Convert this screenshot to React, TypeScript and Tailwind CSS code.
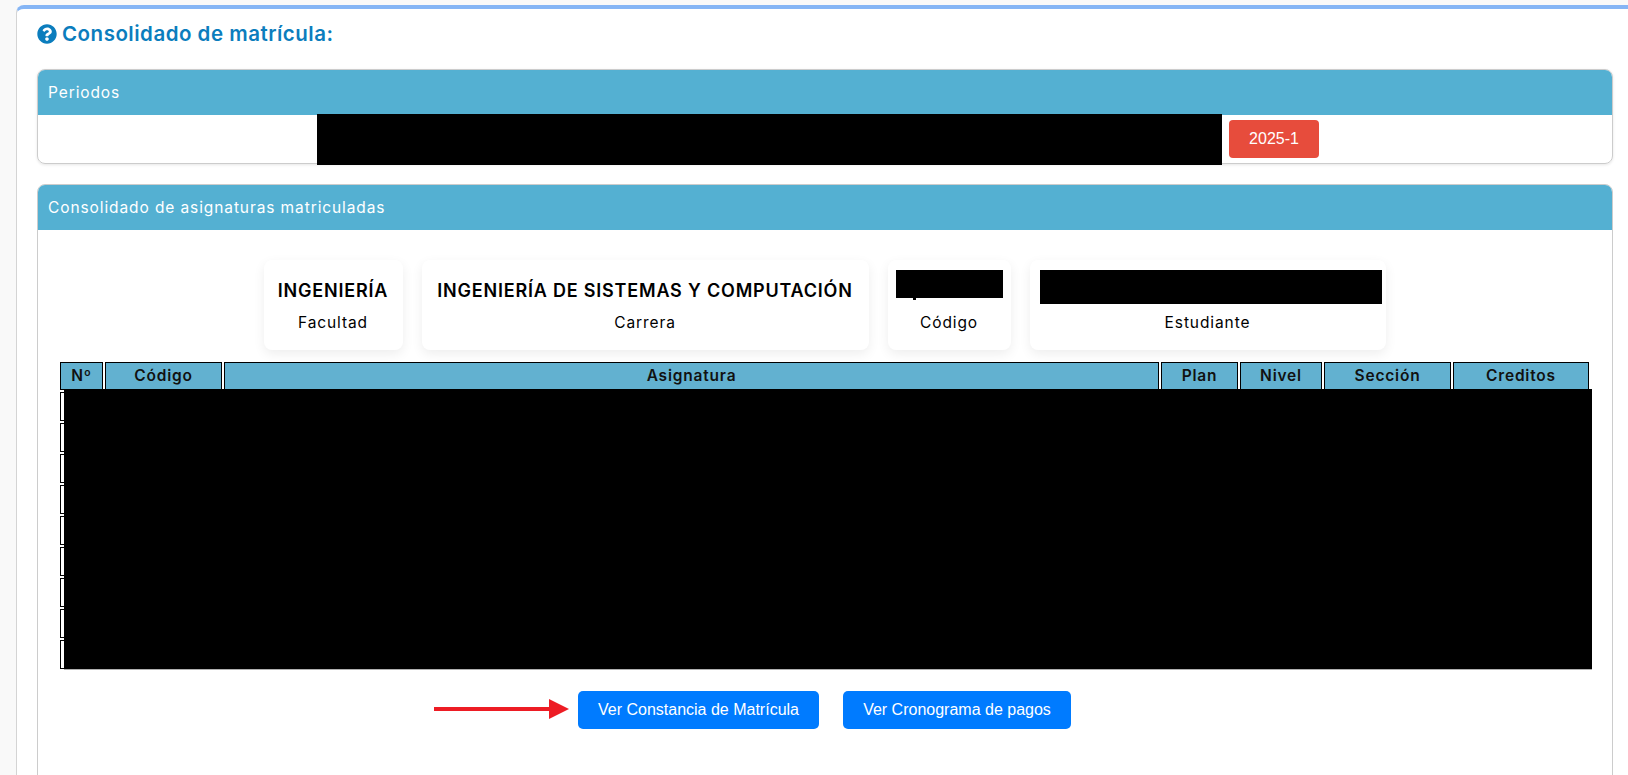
import React from 'react';
import { FaQuestionCircle } from 'react-icons/fa';

const columns = [
  { label: 'Nº', width: 'w-[43px]' },
  { label: 'Código', width: 'w-[117px]' },
  { label: 'Asignatura', width: '' },
  { label: 'Plan', width: 'w-[77px]' },
  { label: 'Nivel', width: 'w-[82px]' },
  { label: 'Sección', width: 'w-[127px]' },
  { label: 'Creditos', width: 'w-[136px]' },
];

const rows = [1, 2, 3, 4, 5, 6, 7, 8, 9];

const font = "font-['Inter','Liberation_Sans',sans-serif]";

const InfoCard: React.FC<{ label: string; width: string; children: React.ReactNode }> = ({ label, width, children }) => (
  <div className={`${width} h-[90px] bg-white rounded-[8px] shadow-[0_4px_12px_rgba(0,0,0,0.07)] flex flex-col items-center`}>
    <div className="h-[50px] w-full flex items-center justify-center pt-[10px]">{children}</div>
    <div className="mt-[2px] text-[15.5px] tracking-[0.9px] leading-[22px] text-black">{label}</div>
  </div>
);

export default function App() {
  return (
    <div className={`h-[775px] overflow-hidden bg-[#f9f9f9] pt-[5px] ${font}`}>
      <div className="ml-[16px] mr-[-20px] h-[800px] bg-white border-l border-[#d4d4d4] border-t-4 border-t-[#85b5f5] rounded-tl-[8px] pl-[20px] pr-[35px]">
        <h1 className="h-[60px] pt-[11px] flex items-start gap-[5px] text-[#0b7dbd] text-[20.5px] tracking-[0.5px] leading-[28px] font-semibold">
          <FaQuestionCircle className="w-[20px] h-[20px] mt-[4px]" />
          <span>Consolidado de matrícula:</span>
        </h1>

        <section className="border border-[#cccccc] rounded-[8px] shadow-[0_1px_3px_rgba(0,0,0,0.1)]">
          <div className="h-[45px] pt-px bg-[#54b0d2] rounded-t-[7px] px-[10px] flex items-center text-white text-[15.5px] tracking-[0.9px]">Periodos</div>
          <div className="h-[48px] flex">
            <div className="w-[279px]"></div>
            <div className="w-[905px] h-[51px] -mt-px bg-black"></div>
            <div className="ml-[7px] mt-[5px] w-[90px] h-[38px] bg-[#e74c3c] rounded-[4px] flex items-center justify-center text-white text-[16px] font-['Liberation_Sans',sans-serif]">2025-1</div>
          </div>
        </section>

        <section className="mt-[20px] border border-[#cccccc] rounded-[8px] h-[700px]">
          <div className="h-[45px] pt-px bg-[#54b0d2] rounded-t-[7px] px-[10px] flex items-center text-white text-[15.5px] tracking-[0.9px]">Consolidado de asignaturas matriculadas</div>
          <div className="pl-[20px] pr-[21px] pt-[30px]">
            <div className="flex justify-center gap-[19px]">
              <InfoCard label="Facultad" width="w-[139px]">
                <span className="text-[18px] tracking-[0.8px] font-semibold text-black">INGENIERÍA</span>
              </InfoCard>
              <InfoCard label="Carrera" width="w-[447px]">
                <span className="text-[18px] tracking-[0.8px] font-semibold text-black">INGENIERÍA DE SISTEMAS Y COMPUTACIÓN</span>
              </InfoCard>
              <InfoCard label="Código" width="w-[123px]">
                <div className="relative w-[107px] h-[28px] mb-[12px] bg-black">
                  <div className="absolute left-[17px] bottom-[-2px] w-[3px] h-[2px] bg-black"></div>
                </div>
              </InfoCard>
              <InfoCard label="Estudiante" width="w-[356px]">
                <div className="w-[342px] h-[34px] mb-[6px] ml-[6px] bg-black"></div>
              </InfoCard>
            </div>

            <div className="relative mt-[10px]">
              <table className="w-full table-fixed border-separate border-spacing-0.5">
                <thead>
                  <tr>
                    {columns.map(c => (
                      <th key={c.label} className={`${c.width} h-[28px] p-0 bg-[#62b1d0] border border-black text-[15.5px] tracking-[0.8px] font-semibold text-[#111111] text-center`}>{c.label}</th>
                    ))}
                  </tr>
                </thead>
                <tbody>
                  {rows.map(r => (
                    <tr key={r}>
                      {columns.map(c => (
                        <td key={c.label} className="h-[29px] p-0 border border-black"></td>
                      ))}
                    </tr>
                  ))}
                </tbody>
              </table>
              {/* tapa negra encima de las filas */}
              <div className="absolute left-[6px] top-[29px] right-[-1px] bottom-[1px] bg-black border-b border-[#b0b0b0]"></div>
            </div>

            <div className="relative mt-[20px] flex justify-center gap-[24px] font-['Liberation_Sans',sans-serif]">
              <button className="w-[241px] h-[38px] bg-[#007bff] rounded-[5px] text-white text-[16px]">Ver Constancia de Matrícula</button>
              <button className="w-[228px] h-[38px] bg-[#007bff] rounded-[5px] text-white text-[16px]">Ver Cronograma de pagos</button>
              <svg className="absolute left-[376px] top-[7px]" width="136" height="22" viewBox="0 0 136 22">
                <rect x="0" y="9" width="116" height="4" fill="#ed1c24" />
                <polygon points="115,1 135,11 115,21" fill="#ed1c24" />
              </svg>
            </div>
          </div>
        </section>
      </div>
    </div>
  );
}
